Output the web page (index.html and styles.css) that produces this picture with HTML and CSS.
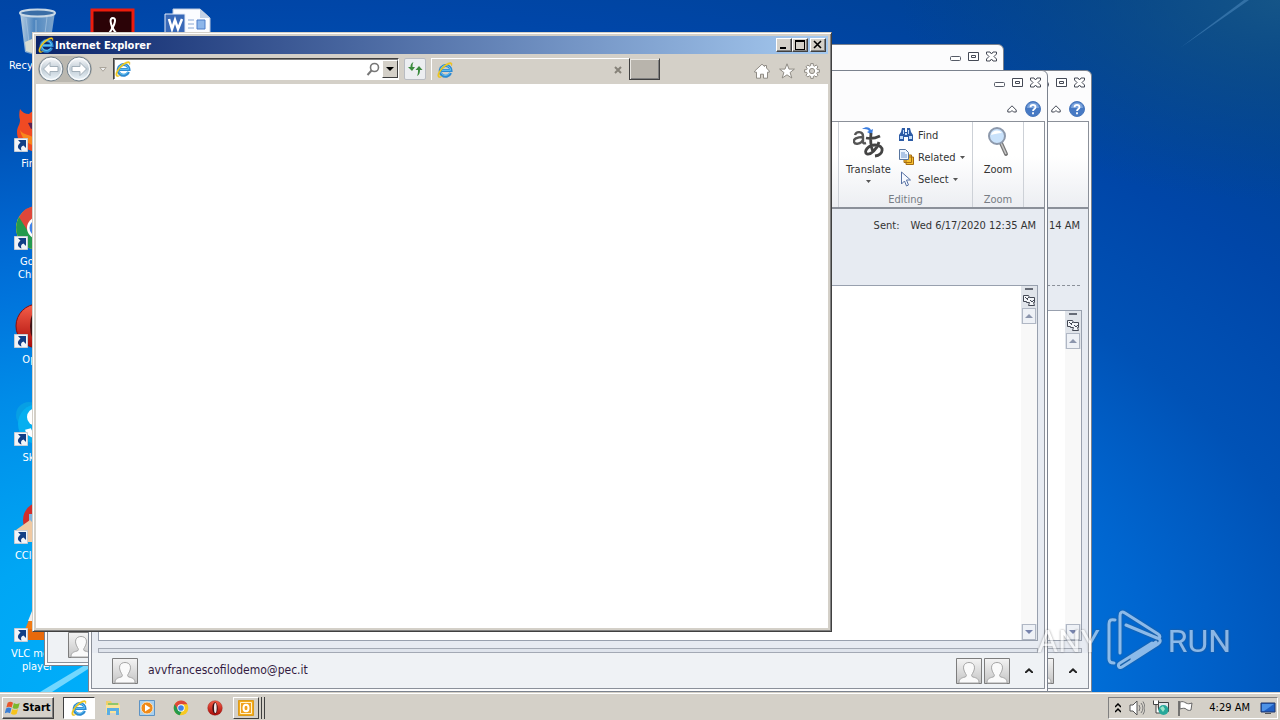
FILE: index.html
```html
<!DOCTYPE html>
<html lang="en">
<head>
	<meta charset="UTF-8">
	<title>Desktop</title>
	<link rel="stylesheet" href="styles.css">
</head>
<body>

	<!-- shared icons -->
	<svg class="defs" aria-hidden="true">
		<defs>
			<linearGradient id="gBlue" x1="0" y1="0" x2="0" y2="1"><stop offset="0" stop-color="#6fd0fa"/><stop offset="1" stop-color="#1a78cc"/></linearGradient>
			<linearGradient id="gGlass" x1="0" y1="0" x2="0" y2="1"><stop offset="0" stop-color="#fdfdfe"/><stop offset=".5" stop-color="#c0ccd5"/><stop offset="1" stop-color="#eef7fc"/></linearGradient>
			<linearGradient id="gRed" x1="0" y1="0" x2="0" y2="1"><stop offset="0" stop-color="#f6604a"/><stop offset="1" stop-color="#a80a08"/></linearGradient>
			<linearGradient id="gBin" x1="0" y1="0" x2="1" y2="0"><stop offset="0" stop-color="#b9cfe2"/><stop offset=".4" stop-color="#4e86bf"/><stop offset="1" stop-color="#7fa6cd"/></linearGradient>
			<linearGradient id="gPerson" x1="0" y1="0" x2="0" y2="1"><stop offset="0" stop-color="#f4f4f4"/><stop offset="1" stop-color="#c4c4c4"/></linearGradient>
			<radialGradient id="gCorner" cx="1" cy="0" r="1"><stop offset="0" stop-color="#1a5a86" stop-opacity=".8"/><stop offset="1" stop-color="#0a4a80" stop-opacity="0"/></radialGradient>
			<symbol id="ie" viewBox="0 0 16 16">
				<path d="M13.6 11A5.4 5.4 0 1 1 14 8.6H4.500" fill="none" stroke="#2d8ad2" stroke-width="3"/>
				<path d="M13 10.600A5 5 0 1 1 13.500 8.300H5" fill="none" stroke="#66c6f5" stroke-width="1"/>
				<path d="M1.300 15.200C-1.300 12.500 5 3.500 11 1c3.500-1.400 4.800.2 3.600 3 .2-2-1.200-2.500-3.400-1.400C6.500 5 1.500 11 2.300 14c.4 1.200 1.800.8 3.200 0-1.600 1.400-3.200 2.200-4.200 1.200z" fill="#f5cf1b" stroke="#d8a60c" stroke-width=".3"/>
			</symbol>
			<symbol id="shortcut" viewBox="0 0 14 14">
				<path d="M.5.5h13v13H.5z" fill="#f1f4f8" stroke="#c7ccd4"/>
				<path d="M4 2h8v8L9.500 7.500C7 8.500 6.500 10 7.500 12.500 3.500 11 2.500 7.500 6.500 4.700z" fill="#123f86"/>
			</symbol>
			<symbol id="winmin" viewBox="0 0 12 12"><rect x=".5" y="5.500" width="10" height="4" rx="1" fill="#fff" stroke="#555a66"/></symbol>
			<symbol id="winmax" viewBox="0 0 12 12"><path d="M.5 1.500h10v8H.5zM3.500 4.500h4v2h-4z" fill="#fff" stroke="#444955"/></symbol>
			<symbol id="winclose" viewBox="0 0 12 12"><path d="M.5 1h3.500l1.500 2L7 1h3.500v2L8 5.500 10.500 8v2H7L5.500 8 4 10H.5V8L3 5.500.5 3z" fill="#fff" stroke="#444955"/></symbol>
			<symbol id="collapse" viewBox="0 0 10 8"><path d="M5 .8L9.200 5v2H6.500L5 5.500 3.500 7H.8V5z" fill="#fff" stroke="#444955"/></symbol>
			<symbol id="help" viewBox="0 0 16 16"><circle cx="8" cy="8" r="7.500" fill="#4679c4" stroke="#4a78bc"/><path d="M2 7a6 5.500 0 0 1 12 0z" fill="#7ba3dc"/><path d="M5.500 6.200c0-3.200 5-3.200 5 0 0 1.800-2.500 1.800-2.500 3.800M8 11.300v2" fill="none" stroke="#fff" stroke-width="1.800"/></symbol>
			<symbol id="person" viewBox="0 0 26 26">
				<path d="M.5.5h25v25H.5z" fill="url(#gPerson)" stroke="#7d7d7d"/>
				<path d="M3 25c0-4 2-5 6-6 2-.6 1.500-2 .5-3.500C5.500 9 8 4.500 13 4.500s7.500 4.500 3.500 11c-1 1.500-1.500 2.900.5 3.500 4 1 6 2 6 6z" fill="#fafafa" stroke="#a5a5a5"/>
			</symbol>
			<symbol id="nextmsg" viewBox="0 0 12 12"><path d="M.5 1.500h5l1 2h5v5h-1l1 3h-6l1-3h-3v-1h-3zM2 3l3 3M6 3L4 5M7 6l2 2 2-2" fill="#f4f6f9" stroke="#444955"/></symbol>
			<symbol id="up" viewBox="0 0 8 4"><path d="M0 4l4-4 4 4z" fill="#8c96ad"/></symbol>
			<symbol id="down" viewBox="0 0 8 4"><path d="M0 0h8L4 4z" fill="#7784ad"/></symbol>
			<symbol id="caret" viewBox="0 0 5 3"><path d="M0 0h5L2.500 3z" fill="#555"/></symbol>
			<symbol id="expand" viewBox="0 0 8 5"><path d="M0 5V3.800L4 0l4 3.800V5H6.500L4 2.800 1.500 5z" fill="#222"/></symbol>
			<symbol id="chrome" viewBox="0 0 48 48">
				<circle cx="24" cy="24" r="22" fill="#f7c921"/>
				<path d="M24 24L5 13a22 22 0 0 0 15 32.500L28 30z" fill="#249a4d"/>
				<path d="M24 13h19.500A22 22 0 0 0 5 13l10 16z" fill="#de473a"/>
				<circle cx="24" cy="24" r="11" fill="#fff"/><circle cx="24" cy="24" r="8.500" fill="#3f82e8"/>
			</symbol>
			<symbol id="opera" viewBox="0 0 48 48">
				<circle cx="24" cy="24" r="22" fill="url(#gRed)" stroke="#8b0b09"/>
				<ellipse cx="24" cy="24" rx="8" ry="17" fill="#3d1114"/><ellipse cx="25" cy="24" rx="4" ry="15" fill="#f3e9e9"/>
			</symbol>
		</defs>
	</svg>

	<main class="desktop">
		<svg class="rays" viewBox="0 0 1280 692" preserveAspectRatio="none" aria-hidden="true">
			<path d="M900 0h380v200H900z" fill="url(#gCorner)"/>
			<path d="M40 692L110 650v5L52 692z" fill="#8fe2ff" opacity=".8"/>
			<path d="M1180 48L1244 0h5z" fill="#5b96cc" opacity=".45"/>
		</svg>

		<div class="icons">
			<div class="icon">
				<svg viewBox="0 0 48 48"><path d="M6 4l5 40q13 6 24 0l6-40z" fill="url(#gBin)"/><path d="M12 10l4 32M33 9l-4 33M22 12v32" stroke="#a9c6e2" opacity=".7"/><ellipse cx="23.500" cy="5" rx="17.500" ry="3.500" fill="#3a6da6" stroke="#c8d8e6" stroke-width="2"/><path d="M11 34l7-3 6 5 5-3 5 9q-11 6-22 1z" fill="#d8dcd2"/></svg>
				<span>Recycle Bin</span>
			</div>
			<div class="icon">
				<svg viewBox="0 0 48 48"><path d="M6 3c2 3 5 5 9 5 3-3 8-5 13-4 12 2 17 12 16 21S34 46 24 46 3 38 3 26c0-5 3-7 3-12-1-3-1-7 0-11z" fill="#f04a23"/><path d="M6 24c4 6 10 4 14 8 4 5 12 5 17 0-4 11-27 12-31-8z" fill="#f9861c"/><path d="M14 17c4-1 8 1 8 4l-5 2z" fill="#5a2252"/></svg>
				<svg class="arrow"><use href="#shortcut"/></svg>
				<span>Firefox</span>
			</div>
			<div class="icon">
				<svg><use href="#chrome"/></svg>
				<svg class="arrow"><use href="#shortcut"/></svg>
				<span>Google Chrome</span>
			</div>
			<div class="icon">
				<svg><use href="#opera"/></svg>
				<svg class="arrow"><use href="#shortcut"/></svg>
				<span>Opera</span>
			</div>
			<div class="icon">
				<svg viewBox="0 0 48 48"><circle cx="15" cy="15" r="13" fill="#079fe4"/><circle cx="24" cy="24" r="20" fill="#06aff0"/><circle cx="22" cy="17" r="9" fill="#fff"/><path d="M14 29c2 9 18 9 19 1" stroke="#fff" stroke-width="6" fill="none"/></svg>
				<svg class="arrow"><use href="#shortcut"/></svg>
				<span>Skype</span>
			</div>
			<div class="icon">
				<svg viewBox="0 0 48 48"><circle cx="27" cy="22" r="18" fill="#d22d2b"/><path d="M15 16h28l-4 14H15z" fill="#7fb4e0"/><path d="M2 32l14-10 4 4 9 5-4 13H6z" fill="#f0c9a2"/></svg>
				<svg class="arrow"><use href="#shortcut"/></svg>
				<span>CCleaner</span>
			</div>
			<div class="icon">
				<svg viewBox="0 0 48 48"><path d="M24 2l14 34H10z" fill="#f27b13"/><path d="M18 15h12l4 10H14z" fill="#eee"/><path d="M8 33h32l6 11H2z" fill="#e8690b"/></svg>
				<svg class="arrow"><use href="#shortcut"/></svg>
				<span>VLC media player</span>
			</div>
			<div class="icon col2">
				<svg viewBox="0 0 48 48"><path d="M3 2h41v44H3z" fill="#2b0307" stroke="#ee1c0c" stroke-width="3"/><path d="M24 10c-4 0-2 6-1 9s-5 8-7 12M24 10c4 0 1 7 0 9s3 6 8 11" fill="none" stroke="#fff" stroke-width="2"/></svg>
			</div>
			<div class="icon col3">
				<svg viewBox="0 0 48 48"><path d="M9 1h27l10 9v37H9z" fill="#fbfcff" stroke="#b9c6dc"/><path d="M36 1v9h10z" fill="#c5d2e5"/><path d="M24 12h6M24 16h6M24 20h6" stroke="#8aa8d4"/><path d="M33 12h8v9h-8z" fill="#8db6ea" stroke="#4d7dc8"/><path d="M1 6h20v20H1z" fill="#3969b8" stroke="#e4ebf7"/><path d="M5 11l3 10 3-9 3 9 4-10" fill="none" stroke="#fff" stroke-width="2.500"/></svg>
			</div>
		</div>

		<!-- Outlook windows, back to front -->
		<section class="outlook win-back">
			<div class="caption">
				<button aria-label="Minimize"><svg><use href="#winmin"/></svg></button>
				<button aria-label="Restore"><svg><use href="#winmax"/></svg></button>
				<button aria-label="Close"><svg><use href="#winclose"/></svg></button>
			</div>
			<div class="inner">
				<div class="head"></div>
				<div class="message"></div>
				<div class="splitter"></div>
				<div class="people"><svg class="person"><use href="#person"/></svg></div>
			</div>
		</section>

		<section class="outlook win-right">
			<div class="caption">
				<button aria-label="Minimize"><svg><use href="#winmin"/></svg></button>
				<button aria-label="Restore"><svg><use href="#winmax"/></svg></button>
				<button aria-label="Close"><svg><use href="#winclose"/></svg></button>
			</div>
			<div class="tabs">
				<button aria-label="Minimize the Ribbon"><svg class="collapse"><use href="#collapse"/></svg></button>
				<button aria-label="Help"><svg class="help"><use href="#help"/></svg></button>
			</div>
			<div class="inner">
				<div class="ribbon"></div>
				<div class="head tall">
					<div class="sent"><span>14 AM</span></div>
				</div>
				<div class="message">
					<div class="scroll">
						<i class="grip"></i>
						<button class="next" aria-label="Next item"><svg><use href="#nextmsg"/></svg></button>
						<button class="step" aria-label="Scroll up"><svg><use href="#up"/></svg></button>
						<i class="track"></i>
						<button class="step" aria-label="Scroll down"><svg><use href="#down"/></svg></button>
					</div>
				</div>
				<div class="splitter"></div>
				<div class="people">
					<span class="mail"></span>
					<svg class="person"><use href="#person"/></svg>
					<svg class="person"><use href="#person"/></svg>
					<button aria-label="Expand"><svg class="expand"><use href="#expand"/></svg></button>
				</div>
			</div>
		</section>

		<section class="outlook win-front">
			<div class="caption">
				<button aria-label="Minimize"><svg><use href="#winmin"/></svg></button>
				<button aria-label="Restore"><svg><use href="#winmax"/></svg></button>
				<button aria-label="Close"><svg><use href="#winclose"/></svg></button>
			</div>
			<div class="tabs">
				<button aria-label="Minimize the Ribbon"><svg class="collapse"><use href="#collapse"/></svg></button>
				<button aria-label="Help"><svg class="help"><use href="#help"/></svg></button>
			</div>
			<div class="inner">
				<div class="ribbon">
					<div class="group"></div>
					<div class="group editing">
						<div class="tools">
							<button class="big">
								<svg viewBox="0 0 32 32"><path d="M2 9c1-4 8-4 8 1v6q0 2 3 1M10 11C4 11 0 13 1 16s7 2 9-2" fill="none" stroke="#555" stroke-width="2.400"/><path d="M9 3c4-3 8-2 9 1l2-1-1 6-5-3 2-1c-1-2-4-2-7-2z" fill="#3b7de0"/><path d="M13 12c5 1 10 0 14-2M18 7c-1 8 0 14 2 19M26 16c-2 7-8 13-12 12-4-2 1-9 8-9 10 0 9 10 0 11" fill="none" stroke="#444" stroke-width="2.800"/></svg>
								<span>Translate</span>
								<svg class="caret"><use href="#caret"/></svg>
							</button>
							<div class="stack">
								<button><svg viewBox="0 0 16 16"><path d="M4 1h3v4h2V1h3l1 4 2 3v6h-5v-4H6v4H1V8l2-3z" fill="#2d5ca6"/><path d="M2 9h3v3H2zM11 9h3v3h-3zM5 3h1v4H5zM10 3h1v4h-1zM7 6h2v2H7z" fill="#c2dcf8"/></svg><span>Find</span></button>
								<button><svg viewBox="0 0 16 16"><path d="M8 8h7.500v7.500H8zM6 6h7.500v7.500H6z" fill="#f7c132" stroke="#a66d12"/><path d="M1.500.5h6l3 3v7h-9z" fill="#edf5ff" stroke="#58759f"/><path d="M3 4h4M3 6h6M3 8h6" stroke="#6b94cd"/></svg><span>Related</span><svg class="caret"><use href="#caret"/></svg></button>
								<button><svg viewBox="0 0 16 16"><path d="M3.500 1v12l3-3 2 5 2-1-2-5h4z" fill="#f7faff" stroke="#5872a4"/></svg><span>Select</span><svg class="caret"><use href="#caret"/></svg></button>
							</div>
						</div>
						<div class="name">Editing</div>
					</div>
					<div class="group zoom">
						<div class="tools">
							<button class="big">
								<svg viewBox="0 0 32 32"><path d="M19 17l5 11" stroke="#777" stroke-width="4" stroke-linecap="round"/><path d="M19 17l5 11" stroke="#c8c8c8" stroke-width="1.500"/><circle cx="15" cy="10" r="8" fill="#c9e2fb" stroke="#8d99ac" stroke-width="2"/><path d="M9 9c1-5 8-6 11-2-4 0-7 1-11 2z" fill="#fff"/></svg>
								<span>Zoom</span>
							</button>
						</div>
						<div class="name">Zoom</div>
					</div>
				</div>
				<div class="head">
					<div class="sent"><span>Sent:</span><span>Wed 6/17/2020 12:35 AM</span></div>
				</div>
				<div class="message">
					<div class="scroll">
						<i class="grip"></i>
						<button class="next" aria-label="Next item"><svg><use href="#nextmsg"/></svg></button>
						<button class="step" aria-label="Scroll up"><svg><use href="#up"/></svg></button>
						<i class="track"></i>
						<button class="step" aria-label="Scroll down"><svg><use href="#down"/></svg></button>
					</div>
				</div>
				<div class="splitter"></div>
				<div class="people">
					<svg class="person"><use href="#person"/></svg>
					<span class="mail">avvfrancescofilodemo@pec.it</span>
					<svg class="person"><use href="#person"/></svg>
					<svg class="person"><use href="#person"/></svg>
					<button aria-label="Expand"><svg class="expand"><use href="#expand"/></svg></button>
				</div>
			</div>
		</section>

		<!-- Internet Explorer -->
		<section class="ie">
			<div class="titlebar">
				<svg class="logo"><use href="#ie"/></svg>
				<h1>Internet Explorer</h1>
				<button aria-label="Minimize"><svg viewBox="0 0 12 10"><path d="M2 7h6v2H2z"/></svg></button>
				<button aria-label="Maximize"><svg viewBox="0 0 12 10"><path d="M1 0h10v10H1zM2 2v7h8V2z" fill-rule="evenodd"/></svg></button>
				<button class="close" aria-label="Close"><svg viewBox="0 0 12 10"><path d="M2 1l7 7M9 1L2 8" stroke="#000" stroke-width="1.600"/></svg></button>
			</div>
			<div class="toolbar">
				<div class="nav">
					<button aria-label="Back"><svg viewBox="0 0 26 26"><circle cx="13" cy="13" r="12" fill="url(#gGlass)" stroke="#75818a"/><circle cx="13" cy="13" r="10.500" fill="none" stroke="#fff"/><path d="M12 6.500L5.500 13l6.500 6.500v-4h8v-5h-8z" fill="#fff" stroke="#a2afb9"/></svg></button>
					<button aria-label="Forward"><svg viewBox="0 0 26 26"><circle cx="13" cy="13" r="12" fill="url(#gGlass)" stroke="#75818a"/><circle cx="13" cy="13" r="10.500" fill="none" stroke="#fff"/><path d="M14 6.500l6.500 6.500-6.500 6.500v-4H6v-5h8z" fill="#fff" stroke="#a2afb9"/></svg></button>
				</div>
				<button class="recent" aria-label="Recent pages"><svg viewBox="0 0 8 5"><path d="M.8.5h6.400L4 4.300z" fill="#eee" stroke="#aaa59c"/></svg></button>
				<div class="address">
					<svg class="logo"><use href="#ie"/></svg>
					<input type="text" aria-label="Address">
					<svg class="search" viewBox="0 0 14 14"><circle cx="8.500" cy="5.500" r="4" fill="#fff" stroke="#777" stroke-width="1.600"/><path d="M5.500 8.500L1.500 13" stroke="#777" stroke-width="2"/></svg>
					<button aria-label="Show address list"><svg viewBox="0 0 8 4"><path d="M0 0h8L4 4z"/></svg></button>
				</div>
				<button class="refresh" aria-label="Refresh"><svg viewBox="0 0 16 16"><path d="M6.500 1C4 2 3.500 4 3.500 6H1l4 4 3-4H5.500c0-2 0-3 1-5zM10 15c2.500-1 3-4 3-6h2.500L12 5 8.500 9H11c0 2 0 4-1 6z" fill="#3a8a3c"/></svg></button>
				<div class="tab">
					<svg class="logo"><use href="#ie"/></svg>
					<button aria-label="Close tab"><svg viewBox="0 0 8 8"><path d="M1 1l6 6M7 1L1 7" stroke="#868279" stroke-width="2"/></svg></button>
				</div>
				<button class="newtab" aria-label="New tab"></button>
				<div class="tools">
					<button aria-label="Home"><svg viewBox="0 0 16 16"><path d="M8 1.200l2.500 2.300V2.500h2V5L15.300 8v1.200H13.500v6H9.500v-4h-3v4h-4v-6H.7V8z" fill="#fff" stroke="#8f8b84"/></svg></button>
					<button aria-label="Favorites"><svg viewBox="0 0 16 16"><path d="M8 .8l2 5.300h5.400l-4.300 3.400 1.700 5.500L8 11.800 3.200 15l1.700-5.500L.6 6.100H6z" fill="#fff" stroke="#8f8b84"/></svg></button>
					<button aria-label="Tools"><svg viewBox="0 0 16 16"><path d="M6.700.6h2.600v2l1.300.6L12.200 2 14 3.800l-1.200 1.600.6 1.300h2v2.600h-2l-.6 1.300 1.200 1.600-1.800 1.800-1.600-1.200-1.300.6v2H6.700v-2l-1.300-.6L3.800 14 2 12.200l1.200-1.600-.6-1.300h-2V6.700h2l.6-1.300L2 3.800 3.800 2l1.600 1.200 1.300-.6z" fill="#fff" stroke="#8f8b84"/><circle cx="8" cy="8" r="2.600" fill="#d4d0c8" stroke="#8f8b84"/></svg></button>
				</div>
			</div>
			<div class="page"></div>
		</section>

		<div class="watermark">
			<span>ANY</span>
			<svg viewBox="0 0 56 62"><path d="M9 10c-4-1-6 0-6 4v35c0 3 2 4 5 4M14 43V6c0-4 2-5 5-3l33 21c3 2 2 5-1 4L20 15M14 43V20M16 57l36-23c3-2 3-4 0-6M50 32L26 49M16 57c-3 2-5-2-2-4L46 33" fill="none" stroke="#fff" stroke-width="3" stroke-linecap="round" stroke-linejoin="round"/></svg>
			<span>RUN</span>
		</div>
	</main>

	<footer class="taskbar">
		<button class="start"><svg viewBox="0 0 18 18"><path d="M3 3c2-1.500 4-1.500 6 0L7.500 8.500c-2-1.300-4-1.300-6 0z" fill="#e8562a"/><path d="M10 3.500c2 1.300 4 1.300 6.500 0L15 9c-2 1.300-4 1.300-6.500 0z" fill="#7cb82c"/><path d="M1.200 9.500c2-1.300 4-1.300 6 0L5.700 15c-2-1.300-4-1.300-6 0z" fill="#3a7fd5"/><path d="M8.200 10c2 1.300 4 1.300 6.500 0l-1.500 5.500c-2 1.300-4 1.300-6.500 0z" fill="#f6c31c"/></svg>Start</button>
		<nav class="tasks">
			<button class="active" aria-label="Internet Explorer"><svg><use href="#ie"/></svg></button>
			<button aria-label="Explorer"><svg viewBox="0 0 16 16"><path d="M1 1h5l1 2h7v9H1z" fill="#f0cf6a"/><path d="M3 3h10v4H3z" fill="#8fc66a"/><path d="M1 5h14v8H1z" fill="#f9e39a"/><path d="M2 15V8h12v7h-3v-4H5v4z" fill="#5aaee4"/></svg></button>
			<button aria-label="Media Player"><svg viewBox="0 0 16 16"><path d="M.5.5h15v15H.5z" fill="#a8d0ef" stroke="#5d93c4"/><circle cx="8" cy="8" r="6" fill="#f08a18" stroke="#fbe3c0"/><path d="M6 4.500L11.500 8 6 11.500z" fill="#fff"/></svg></button>
			<button aria-label="Chrome"><svg><use href="#chrome"/></svg></button>
			<button aria-label="Opera"><svg><use href="#opera"/></svg></button>
			<button class="grouped" aria-label="Outlook"><svg viewBox="0 0 16 16"><path d="M.5.5h15v15H.5z" fill="#f4a918" stroke="#d99a1c"/><path d="M2.500 2.500h11v11h-11z" fill="#f2a21c" stroke="#fff3cf"/><ellipse cx="8" cy="8" rx="2.500" ry="3.300" fill="none" stroke="#fff" stroke-width="2"/></svg></button>
		</nav>
		<div class="tray">
			<svg class="chev" viewBox="0 0 6 10"><path d="M0 4l3-3 3 3M0 9l3-3 3 3" fill="none" stroke="#000" stroke-width="1.500"/></svg>
			<svg viewBox="0 0 16 16"><path d="M1 5h3l4-4v14l-4-4H1z" fill="#fff" stroke="#555"/><path d="M10 5q2 3 0 6M12 3q4 5 0 10M14 1.500q4 6.500 0 13" fill="none" stroke="#777"/></svg>
			<svg viewBox="0 0 16 16"><path d="M5.500 2.500h10v9h-10z" fill="#e4e8ea" stroke="#444"/><path d="M.5.500v4h5v-4M3 5v8h4" fill="#fff" stroke="#444"/><circle cx="10.500" cy="10" r="5" fill="#27a89a"/><path d="M7 8l3-2 2 3-2 3z" fill="#9be3c8"/></svg>
			<svg viewBox="0 0 16 16"><path d="M2 1v15" stroke="#555" stroke-width="1.500"/><path d="M3 2c3-1 4 0 6 1s3 1 6 0l-1 7c-2 1-4 0-5-1s-3-1-6 0z" fill="#fff" stroke="#666"/></svg>
			<time>4:29 AM</time>
			<svg viewBox="0 0 16 16"><path d="M1 3h14v9H1z" fill="#1f5fc4" stroke="#20396d"/><path d="M2 4h12L4 11H2z" fill="#4d92e6"/><path d="M5 13h6v1H5z" fill="#555"/></svg>
		</div>
	</footer>

</body>
</html>
```

FILE: styles.css
```css
*{
	box-sizing: border-box;
}
body{
	margin: 0;
	height: 100vh;
	display: flex;
	flex-direction: column;
	overflow: hidden;
	font: 11px/13px "DejaVu Sans Condensed", "DejaVu Sans", sans-serif;
	color: #333;
}
button{
	display: flex;
	align-items: center;
	justify-content: center;
	padding: 0;
	border: none;
	background: none;
	font: inherit;
	color: inherit;
}
svg{
	display: block;
	flex: none;
	width: 16px;
	height: 16px;
}
.defs{
	position: absolute;
	width: 0;
	height: 0;
}

/* desktop */
.desktop{
	position: relative;
	flex: 1;
	overflow: hidden;
	background: radial-gradient(1500px 800px at 20% 100%, #00aefa 10%, #00a6f4 22%, #008ce8 40%, #0074dc 52%, #0066d0 60%, #0052b6 72%, #0046a8 86%, #00408e 105%);
}
.rays{
	position: absolute;
	width: 100%;
	height: 100%;
}
.icons{
	position: absolute;
	display: grid;
	grid-template-rows: repeat(7, 98px);
	grid-auto-flow: column;
	grid-auto-columns: 75px;
}
.icon{
	position: relative;
	display: flex;
	flex-direction: column;
	align-items: center;
	gap: 3px;
	padding: 8px 5px 0;
	text-align: center;
	color: #fff;
}
.col2{
	grid-column: 2;
}
.col3{
	grid-column: 3;
}
.icon svg{
	width: 48px;
	height: 48px;
}
.icon .arrow{
	position: absolute;
	left: 14px;
	top: 40px;
	width: 14px;
	height: 14px;
}

/* outlook */
.outlook{
	position: absolute;
	display: flex;
	flex-direction: column;
	width: 960px;
	height: 622px;
	padding: 0 2px 2px;
	border: 1px solid #7b828e;
	border-radius: 6px 6px 0 0;
	background: #fcfcfd;
}
.win-back{
	left: 44px;
	top: 44px;
}
.win-right{
	left: 132px;
	top: 70px;
}
.win-front{
	left: 88px;
	top: 70px;
}
.caption{
	display: flex;
	justify-content: flex-end;
	gap: 6px;
	padding: 6px 3px 0;
	height: 26px;
}
.caption button,
.caption svg{
	width: 12px;
	height: 12px;
}
.tabs{
	display: flex;
	justify-content: flex-end;
	align-items: center;
	gap: 8px;
	height: 24px;
	padding-right: 4px;
}
.collapse{
	width: 10px;
	height: 8px;
}
.inner{
	flex: 1;
	display: flex;
	flex-direction: column;
	border: 1px solid #8b9099;
	background: #e7ebf2;
}
.ribbon{
	display: flex;
	justify-content: flex-end;
	height: 87px;
	padding-right: 20px;
	border-bottom: 2px solid #8b9099;
	background: linear-gradient(#fff 40%, #eceef2);
}
.group{
	display: flex;
	flex-direction: column;
	justify-content: space-between;
	border-right: 1px solid #cdd1d7;
}
.group .tools{
	display: flex;
	padding-top: 2px;
}
.editing{
	width: 134px;
}
.zoom{
	width: 51px;
}
.big{
	flex-direction: column;
	justify-content: flex-start;
	width: 59px;
	padding-top: 2px;
}
.zoom .big{
	width: 50px;
}
.big svg{
	width: 32px;
	height: 32px;
	margin-bottom: 5px;
}
.group .caret{
	width: 5px;
	height: 3px;
}
.big .caret{
	margin-top: 4px;
}
.stack button{
	gap: 4px;
	height: 22px;
}
.name{
	padding-bottom: 1px;
	text-align: center;
	color: #777c84;
}
.head{
	height: 76px;
	padding: 10px 8px 0;
}
.tall{
	height: 101px;
}
.tall::after{
	content: "";
	display: block;
	margin-top: 53px;
	border-top: 1px dashed #8b9099;
}
.sent{
	display: flex;
	justify-content: flex-end;
	gap: 11px;
}
.message{
	flex: 1;
	display: flex;
	justify-content: flex-end;
	margin: 0 6px;
	border: 1px solid #98a0ae;
	background: #fff;
}
.win-back .head{
	height: 190px;
}
.scroll{
	display: flex;
	flex-direction: column;
	width: 16px;
	background: #e0e4ea;
}
.grip{
	width: 8px;
	height: 2px;
	margin: 2px auto;
	background: #666b76;
}
.next{
	height: 16px;
}
.next svg{
	width: 12px;
	height: 12px;
}
.track{
	flex: 1;
	background: #f8f8f8;
}
.step{
	width: 14px;
	height: 16px;
	margin: 0 1px;
	border: 1px solid #b0b7c4;
	background: #eef1f6;
}
.step svg{
	width: 8px;
	height: 4px;
}
.splitter{
	height: 5px;
	margin: 7px 6px 0;
	border: 1px solid #a3a9b4;
	background: #dfe4ec;
}
.people{
	display: flex;
	align-items: center;
	gap: 2px;
	height: 35px;
	padding: 0 7px 0 20px;
	background: #eff2f5;
}
.person{
	width: 26px;
	height: 26px;
}
.mail{
	flex: 1;
	padding-left: 8px;
	font-size: 12px;
	color: #331a3f;
}
.people button{
	width: 16px;
	height: 16px;
	margin-left: 9px;
}
.expand{
	width: 8px;
	height: 5px;
}

/* internet explorer */
.ie{
	position: absolute;
	left: 32px;
	top: 32px;
	display: flex;
	flex-direction: column;
	width: 800px;
	height: 600px;
	padding: 3px;
	border: 1px solid;
	border-color: #d4d0c8 #404040 #404040 #d4d0c8;
	box-shadow: inset 1px 1px #fff, inset -1px -1px #808080;
	background: #d4d0c8;
}
.titlebar{
	display: flex;
	align-items: center;
	height: 18px;
	padding: 0 2px;
	background: linear-gradient(90deg, #0a246a, #a6caf0);
}
.titlebar h1{
	flex: 1;
	margin: 0;
	padding-left: 1px;
	font-size: 11px;
	color: #fff;
}
.titlebar button{
	width: 16px;
	height: 14px;
	border: 1px solid;
	border-color: #fff #404040 #404040 #fff;
	box-shadow: inset -1px -1px #808080;
	background: #d4d0c8;
}
.titlebar button svg{
	width: 12px;
	height: 10px;
}
.titlebar .close{
	margin-left: 2px;
}
.toolbar{
	display: flex;
	align-items: center;
	height: 30px;
	padding: 0 8px 0 2px;
}
.nav{
	display: flex;
	gap: 2px;
	border-radius: 13px;
	background: #bbb8b0;
}
.nav svg{
	width: 26px;
	height: 26px;
}
.recent{
	width: 21px;
}
.recent svg{
	width: 8px;
	height: 5px;
}
.address{
	display: flex;
	align-items: center;
	width: 286px;
	height: 22px;
	padding-left: 1px;
	border: 1px solid;
	border-color: #404040 #fff #fff #404040;
	box-shadow: inset 1px 1px #808080;
	background: #fff;
}
.address input{
	flex: 1;
	min-width: 0;
	border: none;
	background: none;
	outline: none;
}
.address .search{
	width: 14px;
	height: 14px;
	margin-right: 2px;
}
.address button{
	width: 16px;
	height: 18px;
	border: 1px solid;
	border-color: #fff #404040 #404040 #fff;
	background: #d4d0c8;
}
.address button svg{
	width: 8px;
	height: 4px;
}
.refresh{
	width: 22px;
	height: 22px;
	margin: 0 5px;
	border: 1px solid #b9bcc2;
	border-radius: 2px;
	background: #eceef1;
}
.tab{
	display: flex;
	align-items: center;
	justify-content: space-between;
	width: 198px;
	height: 22px;
	padding: 0 7px 0 5px;
	border: solid #fff;
	border-width: 1px 0 0 1px;
}
.tab button svg{
	width: 8px;
	height: 8px;
}
.newtab{
	width: 31px;
	height: 22px;
	border: 1px solid #404040;
	border-top-color: #d4d0c8;
	box-shadow: inset 1px 1px #e8e6e1, inset -1px -1px #808080;
	background: #b8b4ac;
}
.toolbar .tools{
	display: flex;
	gap: 9px;
	margin-left: auto;
	padding-top: 4px;
}
.page{
	flex: 1;
	background: #fff;
}

/* watermark */
.watermark{
	position: absolute;
	right: 49px;
	bottom: 20px;
	display: flex;
	align-items: center;
	gap: 6px;
	font: 32px/62px Roboto, sans-serif;
	color: #fff;
	opacity: .55;
	filter: drop-shadow(0 0 1px #555);
}
.watermark svg{
	width: 56px;
	height: 62px;
}

/* taskbar */
.taskbar{
	display: flex;
	align-items: center;
	height: 28px;
	padding: 3px 2px 1px;
	border-top: 1px solid #d4d0c8;
	box-shadow: inset 0 1px #fff;
	background: #d4d0c8;
}
.start{
	gap: 1px;
	width: 52px;
	height: 22px;
	border: 1px solid;
	border-color: #fff #404040 #404040 #fff;
	box-shadow: inset -1px -1px #808080;
	font-weight: bold;
	color: #000;
}
.tasks{
	display: flex;
	flex: 1;
	gap: 2px;
	padding-left: 9px;
}
.tasks button{
	width: 32px;
	height: 22px;
}
.tasks .active{
	border: 1px solid;
	border-color: #404040 #fff #fff #404040;
	background: #fff;
}
.tasks .grouped{
	width: 26px;
	border: 1px solid;
	border-color: #fff #404040 #404040 #fff;
	box-shadow: 2px 0 #d4d0c8, 3px 0 #404040, 5px 0 #d4d0c8, 6px 0 #404040;
}
.tray{
	display: flex;
	align-items: center;
	gap: 8px;
	height: 22px;
	padding: 0 1px 0 6px;
	border: 1px solid;
	border-color: #808080 #fff #fff #808080;
	color: #000;
}
.tray .chev{
	width: 6px;
	height: 10px;
}
.tray time{
	padding: 0 2px 0 8px;
}
```
